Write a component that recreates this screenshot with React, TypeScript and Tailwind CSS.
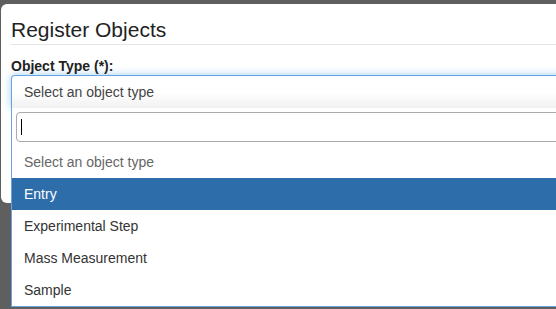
export default function App() {
  const options = ["Select an object type", "Entry", "Experimental Step", "Mass Measurement", "Sample"];
  const active = 1;

  return (
    <div className="relative w-[556px] h-[309px] overflow-hidden bg-[#5f5f5f] font-['Liberation_Sans',Arial,sans-serif] text-[#333]">
      <div className="ml-[1px] mt-[4px] w-[640px] h-[199px] rounded-[6px] bg-white px-[10px]">
        <div className="pt-[14px] pb-[3px] border-b border-[#e5e5e5]">
          <h1 className="text-[21px] leading-[23px] text-[#222]">Register Objects</h1>
        </div>
        <label className="block mt-[12px] h-[18px] text-[14px] leading-[18px] font-bold text-[#222]">
          Object Type (*):
        </label>
        <div className="h-[33px] border border-b-0 border-[#66a3e0] rounded-t-[4px] bg-gradient-to-b from-white from-50% to-[#f1f1f1] pl-[12px] text-[14px] leading-[32px] text-[#444] shadow-[0_0_8px_rgba(102,175,233,0.6)]">
          Select an object type
        </div>
      </div>

      {/* open dropdown, lies over the modal */}
      <div className="absolute left-[11px] top-[108px] w-[620px] border border-t-0 border-[#66a3e0] bg-white">
        <div className="p-[4px] pl-[4px]">
          <div className="h-[30px] border border-[#aaa] rounded-[4px] flex items-center pl-[4px]">
            <span className="block w-[1px] h-[16px] bg-black" />
          </div>
        </div>
        <ul className="text-[14px] leading-[32px]">
          {options.map((o, i) => (
            <li
              key={o}
              className={
                i === active
                  ? "h-[32px] pl-[12px] bg-[#2d6da9] text-white"
                  : i === 0
                    ? "h-[32px] pl-[12px] text-[#666]"
                    : "h-[32px] pl-[12px] text-[#333]"
              }
            >
              {o}
            </li>
          ))}
        </ul>
      </div>
    </div>
  );
}
